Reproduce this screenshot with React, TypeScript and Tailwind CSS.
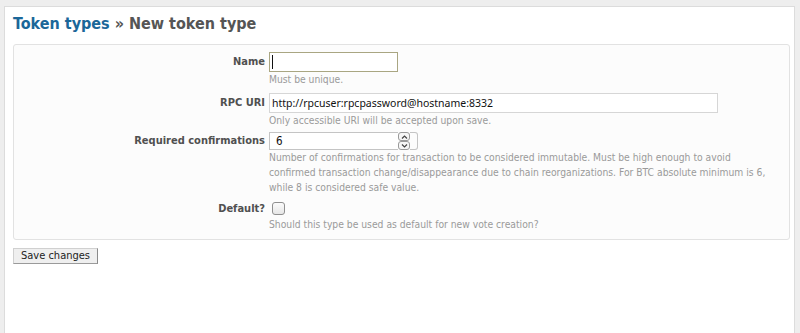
import React from 'react';

// Body text is Tahoma-like in the reference; DejaVu Sans Condensed is the closest installed
const BODY = "font-[family-name:'DejaVu_Sans_Condensed','DejaVu_Sans',sans-serif]";

function Field({
  label,
  help,
  gap,
  children,
}: {
  label: string;
  help: React.ReactNode;
  gap: string;
  children: React.ReactNode;
}) {
  return (
    <div className={gap}>
      <div className="flex items-center">
        <label className="w-[255px] shrink-0 pr-[4px] text-right text-[11px] font-bold text-[#505050] leading-[14px]">
          {label}
        </label>
        {children}
      </div>
      <p className="pl-[255px] text-[10.25px] leading-[15px] text-[#9a9a9a]">{help}</p>
    </div>
  );
}

function Chevron({ up }: { up?: boolean }) {
  return (
    <svg width="7" height="4" viewBox="0 0 7 4" className="block">
      <path
        d={up ? 'M1 3.5 L3.5 1 L6 3.5' : 'M1 0.5 L3.5 3 L6 0.5'}
        fill="none"
        stroke="#444"
        strokeWidth="1.2"
      />
    </svg>
  );
}

export default function App() {
  return (
    <div className={`h-[333px] bg-[#eeeeee] pl-[4px] pr-[5px] pt-[6px] ${BODY}`}>
      <div className="h-full border-l border-r border-t border-[#dcdcdc] bg-white pl-[8px] pr-[4px] pt-[6px]">
        {/* Page title / breadcrumb */}
        <h2 className="mb-[10px] text-[16px] font-bold leading-[21px] text-[#555555]">
          <a className="text-[#1b6799]">Token types</a> » New token type
        </h2>

        {/* Form box */}
        <div className="rounded-[3px] border border-[#e2e2e2] bg-[#fcfcfc] pb-[7px] pr-[10px] pt-[7px]">
          <Field label="Name" help="Must be unique." gap="">
            <div className="relative">
              <input
                type="text"
                defaultValue=""
                className="block h-[20px] w-[129px] border border-[#a9a682] bg-white px-[2px] outline-none"
              />
              <span className="absolute left-[3px] top-[3px] h-[14px] w-px bg-[#111]" />
            </div>
          </Field>

          <Field label="RPC URI" help="Only accessible URI will be accepted upon save." gap="mt-[6px]">
            <input
              type="text"
              defaultValue="http://rpcuser:rpcpassword@hostname:8332"
              className="block h-[20px] w-[449px] border border-[#d6d6d6] bg-white px-[2px] font-['Noto_Sans',sans-serif] text-[10.5px] text-[#111] outline-none"
            />
          </Field>

          <Field
            label="Required confirmations"
            gap="mt-[4px]"
            help={
              <>
                Number of confirmations for transaction to be considered immutable. Must be high enough to avoid
                confirmed transaction change/disappearance due to chain reorganizations. For BTC absolute minimum
                is 6, while 8 is considered safe value.
              </>
            }
          >
            <div className="flex h-[18px] w-[149px] items-stretch">
              <input
                type="text"
                defaultValue="6"
                className="block h-[18px] w-[129px] border border-r-0 border-[#c4c4c4] bg-white pl-[6px] text-[11.5px] text-[#111] outline-none"
              />
              <div className="flex w-[12px] flex-col">
                <span className="flex h-[9px] items-center justify-center rounded-[3px] border border-[#9a9a9a] bg-[#f6f6f6]">
                  <Chevron up />
                </span>
                <span className="flex h-[9px] items-center justify-center rounded-[3px] border border-[#9a9a9a] bg-[#f6f6f6]">
                  <Chevron />
                </span>
              </div>
              <div className="w-[8px] rounded-r-[3px] border border-l-0 border-[#c4c4c4]" />
            </div>
          </Field>

          <Field label="Default?" help="Should this type be used as default for new vote creation?" gap="mt-[5px]">
            <div className="flex h-[17px] items-center pl-[3px]">
              <span className="block h-[13px] w-[13px] rounded-[3px] border border-[#8f8f8f] bg-gradient-to-b from-[#fbfbfb] to-[#e6e6e6]" />
            </div>
          </Field>
        </div>

        <button className="mt-[8px] block h-[16px] w-[85px] border border-[#d0d0d0] border-b-[#9a9a9a] border-r-[#8a8a8a] bg-[#efefef] text-[11px] leading-[14px] text-[#222]">
          Save changes
        </button>
      </div>
    </div>
  );
}
